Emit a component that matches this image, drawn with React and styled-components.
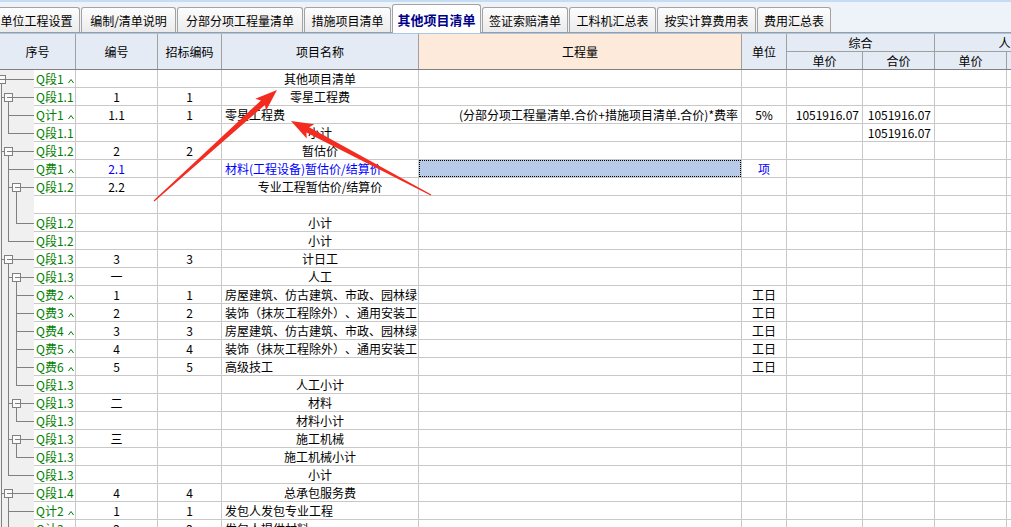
import React from 'react';
import styled, { createGlobalStyle } from 'styled-components';

const GlobalStyle = createGlobalStyle`
  html, body {
    margin: 0;
    padding: 0;
    background: #fff;
    overflow: hidden;
  }
  body {
    font-family: "Noto Sans CJK SC", "Liberation Sans", sans-serif;
    font-size: 12px;
    color: #000;
    text-spacing-trim: space-all;
  }
`;

const COLS = '76px 82px 64px 197px 323px 45px 76px 72px 72px 80px';

const Page = styled.div`
  position: relative;
  width: 1011px;
  height: 527px;
  overflow: hidden;
  display: flex;
  flex-direction: column;
`;

const TabBar = styled.div`
  height: 33px;
  flex: none;
  box-sizing: border-box;
  border-top: 2px solid #c6dcf2;
  border-bottom: 1px solid #9c9c9c;
  background: #eef3fa;
  display: flex;
  align-items: flex-end;
  gap: 1px;
`;

const Tab = styled.div`
  width: ${(p) => p.$w}px;
  flex: none;
  height: ${(p) => (p.$active ? '29px' : '25px')};
  margin-bottom: ${(p) => (p.$active ? '-1px' : '0')};
  box-sizing: border-box;
  border: 1px solid #a3a3a3;
  border-bottom: none;
  border-radius: 3px 3px 0 0;
  background: ${(p) => (p.$active ? '#fff' : 'linear-gradient(#fdfdfd, #ebebeb)')};
  color: ${(p) => (p.$active ? '#00008b' : '#000')};
  font-weight: ${(p) => (p.$active ? 700 : 400)};
  font-size: ${(p) => (p.$active ? '13px' : '12px')};
  display: flex;
  align-items: center;
  justify-content: center;
  white-space: nowrap;
  &:first-child {
    margin-left: -7px;
  }
`;

const Header = styled.div`
  flex: none;
  display: grid;
  grid-template-columns: ${COLS};
  grid-template-rows: 18px 17px;
  border-top: 1px solid #a9c6e6;
  border-bottom: 1px solid #808080;
  background: #e4ebf4;
`;

const HeadCell = styled.div`
  grid-column: ${(p) => p.$col};
  grid-row: ${(p) => p.$row};
  box-sizing: border-box;
  background: ${(p) => (p.$hot ? '#fdeadb' : '#e4ebf4')};
  border-right: 1px solid #a0a0a0;
  border-bottom: ${(p) => (p.$under ? '1px solid #a0a0a0' : 'none')};
  display: flex;
  align-items: center;
  justify-content: center;
  white-space: nowrap;
  overflow: hidden;
`;

const Body = styled.div`
  flex: 1;
  background: #fff;
`;

const Row = styled.div`
  display: grid;
  grid-template-columns: ${COLS};
  height: 18px;
`;

const Cell = styled.div`
  position: relative;
  box-sizing: border-box;
  border-right: 1px solid #c8c8c8;
  border-bottom: 1px solid #c8c8c8;
  padding: 0 3px;
  line-height: 17px;
  white-space: nowrap;
  overflow: hidden;
  text-align: ${(p) => p.$align || 'center'};
  color: ${(p) => (p.$blue ? '#0000ff' : '#000')};
  background: ${(p) => (p.$selected ? '#b7cbe8' : 'transparent')};
  &::after {
    content: '';
    display: ${(p) => (p.$selected ? 'block' : 'none')};
    position: absolute;
    inset: 0;
    border: 1px dotted #000;
  }
`;

const TreeCell = styled.div`
  display: flex;
  box-sizing: border-box;
  border-right: 1px solid #c8c8c8;
`;

const Gutter = styled.div`
  width: 34px;
  flex: none;
  background: #f0f0f0;
  svg {
    display: block;
  }
`;

const Label = styled.div`
  flex: 1;
  box-sizing: border-box;
  border-bottom: 1px solid #c8c8c8;
  padding-left: 2px;
  color: #008000;
  line-height: 17px;
  display: grid;
  grid-template-columns: 32px 8px;
  align-items: center;
  white-space: nowrap;
`;

const Caret = styled.svg`
  align-self: end;
  margin-bottom: 4px;
`;

const Overlay = styled.svg`
  position: absolute;
  left: 0;
  top: 0;
  pointer-events: none;
`;

const tabs = [
  { t: '单位工程设置', w: 87 },
  { t: '编制/清单说明', w: 95 },
  { t: '分部分项工程量清单', w: 126 },
  { t: '措施项目清单', w: 87 },
  { t: '其他项目清单', w: 89, active: true },
  { t: '签证索赔清单', w: 86 },
  { t: '工料机汇总表', w: 87 },
  { t: '按实计算费用表', w: 99 },
  { t: '费用汇总表', w: 74 },
];

const FORMULA = '(分部分项工程量清单.合价+措施项目清单.合价)*费率';
const SUM = '1051916.07';

const rows = [
  { q: 'Q段1', caret: true, d: 0, box: true, name: '其他项目清单' },
  { q: 'Q段1.1', d: 1, box: true, no: '1', code: '1', name: '零星工程费' },
  { q: 'Q计1', caret: true, d: 2, no: '1.1', code: '1', name: '零星工程费', left: true, qty: FORMULA, unit: '5%', up: SUM, total: SUM },
  { q: 'Q段1.1', d: 2, name: '小计', total: SUM },
  { q: 'Q段1.2', d: 1, box: true, no: '2', code: '2', name: '暂估价' },
  { q: 'Q费1', caret: true, d: 2, no: '2.1', name: '材料(工程设备)暂估价/结算价', left: true, unit: '项', blue: true, sel: true },
  { q: 'Q段1.2', d: 2, box: true, no: '2.2', name: '专业工程暂估价/结算价' },
  { q: '', d: 3, blank: true },
  { q: 'Q段1.2', d: 3, name: '小计' },
  { q: 'Q段1.2', d: 2, name: '小计' },
  { q: 'Q段1.3', d: 1, box: true, no: '3', code: '3', name: '计日工' },
  { q: 'Q段1.3', d: 2, box: true, no: '一', name: '人工' },
  { q: 'Q费2', caret: true, d: 3, no: '1', code: '1', name: '房屋建筑、仿古建筑、市政、园林绿', left: true, unit: '工日' },
  { q: 'Q费3', caret: true, d: 3, no: '2', code: '2', name: '装饰（抹灰工程除外）、通用安装工', left: true, unit: '工日' },
  { q: 'Q费4', caret: true, d: 3, no: '3', code: '3', name: '房屋建筑、仿古建筑、市政、园林绿', left: true, unit: '工日' },
  { q: 'Q费5', caret: true, d: 3, no: '4', code: '4', name: '装饰（抹灰工程除外）、通用安装工', left: true, unit: '工日' },
  { q: 'Q费6', caret: true, d: 3, no: '5', code: '5', name: '高级技工', left: true, unit: '工日' },
  { q: 'Q段1.3', d: 3, name: '人工小计' },
  { q: 'Q段1.3', d: 2, box: true, no: '二', name: '材料' },
  { q: 'Q段1.3', d: 3, name: '材料小计' },
  { q: 'Q段1.3', d: 2, box: true, no: '三', name: '施工机械' },
  { q: 'Q段1.3', d: 3, name: '施工机械小计' },
  { q: 'Q段1.3', d: 2, name: '小计' },
  { q: 'Q段1.4', d: 1, box: true, no: '4', code: '4', name: '总承包服务费' },
  { q: 'Q计2', caret: true, d: 2, no: '1', code: '1', name: '发包人发包专业工程', left: true },
  { q: 'Q计3', caret: true, d: 2, no: '2', code: '2', name: '发包人提供材料', left: true },
  { q: 'Q计4', caret: true, d: 2, no: '3', code: '3', name: '总承包服务费', left: true },
  { q: 'Q段1.5', d: 1, box: true, no: '5', code: '5', name: '索赔与现场签证' },
];

// x of the vertical guide for each tree level
const LINE_X = [1.5, 1.5, 8.5, 16.5];
const MID = 9.5;
const GRID = '#808080';

const hasMore = (i, k) => {
  for (let j = i + 1; j < rows.length; j++) {
    if (rows[j].d < k) return false;
    if (rows[j].d === k) return true;
  }
  return false;
};

const TreeLines = ({ i }) => {
  const r = rows[i];
  const d = r.d;
  const parts = [];

  for (let k = 1; k < d; k++) {
    if (hasMore(i, k)) parts.push(<line key={`p${k}`} x1={LINE_X[k]} y1={0} x2={LINE_X[k]} y2={18} />);
  }
  if (d >= 1) {
    parts.push(<line key="up" x1={LINE_X[d]} y1={0} x2={LINE_X[d]} y2={MID} />);
    if (hasMore(i, d)) parts.push(<line key="down" x1={LINE_X[d]} y1={MID} x2={LINE_X[d]} y2={18} />);
  }

  if (r.box) {
    const cx = LINE_X[d + 1];
    if (d >= 1) parts.push(<line key="hl" x1={LINE_X[d]} y1={MID} x2={cx - 4} y2={MID} />);
    parts.push(<line key="hr" x1={cx + 4} y1={MID} x2={34} y2={MID} />);
    if (rows[i + 1] && rows[i + 1].d > d) {
      parts.push(<line key="kid" x1={cx} y1={MID + 4} x2={cx} y2={18} />);
    }
    parts.push(<rect key="box" x={cx - 4} y={MID - 4} width={8} height={8} fill="#fafafa" />);
    parts.push(<line key="minus" x1={cx - 2} y1={MID} x2={cx + 3} y2={MID} />);
  } else if (!r.blank) {
    parts.push(<line key="h" x1={LINE_X[d]} y1={MID} x2={34} y2={MID} />);
  }

  return (
    <svg width="34" height="18" stroke={GRID} strokeWidth="1" shapeRendering="crispEdges">
      {parts}
    </svg>
  );
};

const arrow = (tx, ty, hx, hy) => {
  const len = Math.hypot(hx - tx, hy - ty);
  const ux = (hx - tx) / len;
  const uy = (hy - ty) / len;
  const nx = -uy;
  const ny = ux;
  const head = 22;
  const bx = hx - ux * head;
  const by = hy - uy * head;
  const pt = (x, y) => `${x.toFixed(1)},${y.toFixed(1)}`;
  return [
    pt(tx + nx * 0.6, ty + ny * 0.6),
    pt(bx + ux * 3 + nx * 3, by + uy * 3 + ny * 3),
    pt(bx + nx * 8, by + ny * 8),
    pt(hx, hy),
    pt(bx - nx * 8, by - ny * 8),
    pt(bx + ux * 3 - nx * 3, by + uy * 3 - ny * 3),
    pt(tx - nx * 0.6, ty - ny * 0.6),
  ].join(' ');
};

const App = () => (
  <Page>
    <GlobalStyle />
    <TabBar>
      {tabs.map((tab) => (
        <Tab key={tab.t} $w={tab.w} $active={tab.active}>
          {tab.t}
        </Tab>
      ))}
    </TabBar>

    <Header>
      <HeadCell $col="1" $row="1 / 3">序号</HeadCell>
      <HeadCell $col="2" $row="1 / 3">编号</HeadCell>
      <HeadCell $col="3" $row="1 / 3">招标编码</HeadCell>
      <HeadCell $col="4" $row="1 / 3">项目名称</HeadCell>
      <HeadCell $col="5" $row="1 / 3" $hot>工程量</HeadCell>
      <HeadCell $col="6" $row="1 / 3">单位</HeadCell>
      <HeadCell $col="7 / 9" $row="1" $under>综合</HeadCell>
      <HeadCell $col="9 / 11" $row="1" $under>人工</HeadCell>
      <HeadCell $col="7" $row="2">单价</HeadCell>
      <HeadCell $col="8" $row="2">合价</HeadCell>
      <HeadCell $col="9" $row="2">单价</HeadCell>
      <HeadCell $col="10" $row="2">合价</HeadCell>
    </Header>

    <Body>
      {rows.map((r, i) => (
        <Row key={i}>
          <TreeCell>
            <Gutter>
              <TreeLines i={i} />
            </Gutter>
            <Label>
              <span>{r.q}</span>
              {r.caret && (
                <Caret width="6" height="4" viewBox="0 0 6 4">
                  <polyline points="0.5,4 3,0.5 5.5,4" fill="none" stroke="#008000" strokeWidth="1" />
                </Caret>
              )}
            </Label>
          </TreeCell>
          <Cell $blue={r.blue}>{r.no}</Cell>
          <Cell>{r.code}</Cell>
          <Cell $align={r.left ? 'left' : 'center'} $blue={r.blue}>
            {r.name}
          </Cell>
          <Cell $align="right" $selected={r.sel}>
            {r.qty}
          </Cell>
          <Cell $blue={r.blue}>{r.unit}</Cell>
          <Cell $align="right">{r.up}</Cell>
          <Cell $align="right">{r.total}</Cell>
          <Cell />
          <Cell />
        </Row>
      ))}
    </Body>

    <Overlay width="1011" height="527">
      <polygon points={arrow(154, 201, 277, 90)} fill="#f42c1f" />
      <polygon points={arrow(431, 195, 291, 121)} fill="#f42c1f" />
    </Overlay>
  </Page>
);

export default App;
